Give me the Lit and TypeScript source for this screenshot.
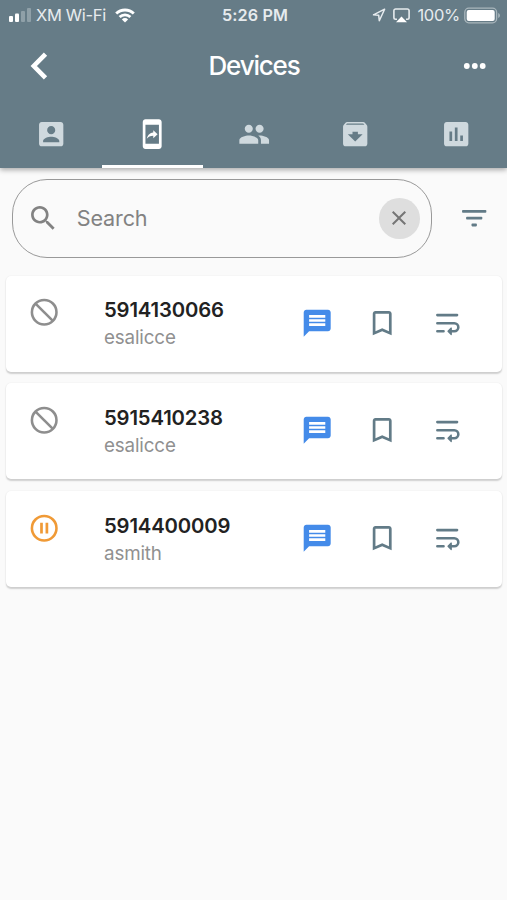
import { LitElement, html, css, svg } from "lit";
import { customElement, property } from "lit/decorators.js";

const ICONS: Record<string, unknown> = {
  account: svg`<path d="M3 5v14c0 1.1.89 2 2 2h14c1.1 0 2-.9 2-2V5c0-1.1-.9-2-2-2H5c-1.11 0-2 .9-2 2zm12 4c0 1.66-1.34 3-3 3s-3-1.34-3-3 1.34-3 3-3 3 1.34 3 3zm-9 8c0-2 4-3.1 6-3.1s6 1.1 6 3.1v1H6v-1z"/>`,
  share: svg`<path d="M17 1H7c-1.1 0-1.99.9-1.99 2v18c0 1.1.89 2 1.99 2h10c1.1 0 2-.9 2-2V3c0-1.1-.9-2-2-2zm0 18H7V5h10v14zm-4.2-5.78v1.75l3.2-2.99L12.8 9v1.7c-3.11.43-4.35 2.56-4.8 4.7 1.11-1.5 2.58-2.18 4.8-2.18z"/>`,
  people: svg`<path d="M16 11c1.66 0 2.99-1.34 2.99-3S17.66 5 16 5c-1.66 0-3 1.34-3 3s1.34 3 3 3zm-8 0c1.66 0 2.99-1.34 2.99-3S9.66 5 8 5C6.34 5 5 6.34 5 8s1.34 3 3 3zm0 2c-2.33 0-7 1.17-7 3.5V19h14v-2.5c0-2.33-4.67-3.5-7-3.5zm8 0c-.29 0-.62.02-.97.05 1.16.84 1.97 1.97 1.97 3.45V19h6v-2.5c0-2.33-4.67-3.5-7-3.5z"/>`,
  archive: svg`<path d="M20.54 5.23l-1.39-1.68C18.88 3.21 18.47 3 18 3H6c-.47 0-.88.21-1.16.55L3.46 5.23C3.17 5.57 3 6.02 3 6.5V19c0 1.1.9 2 2 2h14c1.1 0 2-.9 2-2V6.5c0-.48-.17-.93-.46-1.27zM12 17.5L6.5 12H10v-1.800h4V12h3.500L12 17.500zM5.120 5l.81-1h12l.94 1H5.120z"/>`,
  chart: svg`<path d="M19 3H5c-1.1 0-2 .9-2 2v14c0 1.1.9 2 2 2h14c1.1 0 2-.9 2-2V5c0-1.1-.9-2-2-2zM9 17H7v-7h2v7zm4 0h-2V7h2v10zm4 0h-2v-4h2v4z"/>`,
  search: svg`<path d="M15.500 14h-.79l-.28-.27C15.410 12.590 16 11.110 16 9.500 16 5.910 13.090 3 9.500 3S3 5.910 3 9.500 5.910 16 9.500 16c1.610 0 3.090-.59 4.230-1.570l.27.28v.79l5 4.990L20.490 19l-4.990-5zm-6 0C7.010 14 5 11.990 5 9.500S7.010 5 9.500 5 14 7.010 14 9.500 11.990 14 9.500 14z"/>`,
  close: svg`<path d="M19 6.410L17.590 5 12 10.590 6.410 5 5 6.410 10.590 12 5 17.590 6.410 19 12 13.410 17.590 19 19 17.590 13.410 12z"/>`,
  filter: svg`<g><rect x="3" y="5.900" width="18" height="2.100" rx=".6"/><rect x="6" y="10.950" width="12" height="2.100" rx=".6"/><rect x="10" y="16" width="4" height="2.100" rx=".6"/></g>`,
  block: svg`<circle cx="12" cy="12" r="9.100" class="thin"/><path d="M5.600 5.600l12.800 12.800" class="thin"/>`,
  pause: svg`<circle cx="12" cy="12" r="9.100" class="thin"/><path d="M9 8h2v8H9zM13 8h2v8h-2z"/>`,
  message: svg`<path d="M20 2H4c-1.1 0-1.99.9-1.99 2L2 22l4-4h14c1.1 0 2-.9 2-2V4c0-1.1-.9-2-2-2zm-2 12H6v-2h12v2zm0-3H6V9h12v2zm0-3H6V6h12v2z"/>`,
  bookmark: svg`<path d="M17 3H7c-1.1 0-1.990.9-1.990 2L5 21l7-3 7 3V5c0-1.1-.9-2-2-2zm0 15l-5-2.180L7 18V5h10v13z"/>`,
  wrap: svg`<path d="M4.700 6h14.600M4.700 12h12.550a3 3 0 0 1 0 6H14.500M4.700 18h4.600" class="line"/><path d="M15 15.600v4.800L12.600 18z" class="tip"/>`,
};

@customElement("ui-icon")
class UiIcon extends LitElement {
  static styles = css`
    :host { display: block; width: 32.4px; height: 32.4px; flex: none; }
    svg { display: block; width: 100%; height: 100%; fill: currentColor; }
    .line { fill: none; stroke: currentColor; stroke-width: 1.9; stroke-linecap: round; }
    .thin { fill: none; stroke: currentColor; stroke-width: 1.9; }
    .tip { stroke: currentColor; stroke-width: 0.9; stroke-linejoin: round; }
  `;
  @property() name = "";
  render() {
    return html`<svg viewBox="0 0 24 24">${ICONS[this.name]}</svg>`;
  }
}

@customElement("device-card")
class DeviceCard extends LitElement {
  static styles = css`
    :host {
      display: flex; box-sizing: border-box; height: 96px; padding-left: 21.800px;
      background: #fff; border-radius: 5px;
      box-shadow: 0 1.500px 1.500px rgba(0, 0, 0, 0.17), 0 0 2px rgba(0, 0, 0, 0.05);
    }
    .status { margin-top: 20.500px; color: #8e8e8e; }
    .paused { color: #f09a36; }
    .text { margin: 21.500px 0 0 43.800px; width: 197.200px; }
    .number { font-size: 20.300px; line-height: 26px; font-weight: 600; color: #222; letter-spacing: -0.15px; }
    .user { font-size: 18.800px; line-height: 30px; color: #909090; letter-spacing: -0.15px; }
    .actions { display: flex; gap: 32.400px; margin-top: 31px; color: #627b87; }
    .message { color: #448be9; }
  `;
  @property() number = "";
  @property() user = "";
  @property() status = "block";
  render() {
    return html`
      <ui-icon class="status ${this.status === "pause" ? "paused" : ""}" name=${this.status}></ui-icon>
      <div class="text">
        <div class="number">${this.number}</div>
        <div class="user">${this.user}</div>
      </div>
      <div class="actions">
        <ui-icon class="message" name="message"></ui-icon>
        <ui-icon name="bookmark"></ui-icon>
        <ui-icon name="wrap"></ui-icon>
      </div>`;
  }
}

@customElement("app-root")
class AppRoot extends LitElement {
  static styles = css`
    :host { display: block; height: 900px; overflow: hidden; background: #fafafa; font-family: Inter, "Liberation Sans", sans-serif; }
    header { position: relative; height: 168px; background: #667c87; color: #fff; box-shadow: 0 2px 5px rgba(0, 0, 0, 0.32); }
    .statusbar { display: grid; grid-template-columns: 1fr auto 1fr; align-items: center; height: 30px; padding: 0 6px 0 8px; font-size: 16.500px; color: #e6ebee; }
    .left, .right { display: flex; align-items: center; }
    .right { justify-content: flex-end; }
    .signal { width: 24px; height: 14px; margin-right: 4px; }
    .carrier { letter-spacing: -0.32px; }
    .wifi { width: 20px; height: 15px; margin-left: 9px; }
    .time { font-weight: 600; font-size: 16.200px; letter-spacing: 0.1px; padding-left: 1px; }
    .loc { width: 14px; height: 14px; margin-right: 7.500px; }
    .air { width: 17px; height: 15px; margin-right: 7px; }
    .percent { letter-spacing: -0.3px; }
    .battery { width: 37px; height: 17px; margin-left: 4px; }
    .titlebar { display: grid; grid-template-columns: 60px 1fr 60px; align-items: center; height: 71px; }
    .back { width: 20px; height: 30px; margin-left: 29px; }
    h1 { margin: 0; padding-left: 1px; text-align: center; font-size: 26px; line-height: 32px; font-weight: 500; letter-spacing: -1.200px; }
    .more { width: 24px; height: 8px; margin-left: 16px; }
    .tabs { display: grid; grid-template-columns: repeat(5, 101.200px); padding-left: 0.800px; height: 67px; }
    .tab { display: flex; justify-content: center; box-sizing: border-box; padding-top: 17.200px; color: #cfd9de; border-bottom: 3px solid transparent; }
    .tab.active { color: #fff; border-color: #fff; }
    .searchrow { display: flex; align-items: center; padding: 10.500px 16.200px 0 11.500px; }
    .search { display: flex; align-items: center; box-sizing: border-box; width: 420px; height: 79.500px; padding: 0 11px 0 14.800px; border: 1.500px solid #999; border-radius: 35px; color: #828282; }
    .placeholder { flex: 1; margin-left: 17px; font-size: 21.600px; letter-spacing: -0.15px; }
    .clear { display: flex; align-items: center; justify-content: center; width: 40.500px; height: 40.500px; border-radius: 50%; background: #dedede; color: #757575; }
    .clear ui-icon { width: 24px; height: 24px; }
    .filter { margin-left: auto; color: #627b87; }
    .list { display: flex; flex-direction: column; gap: 11.800px; padding: 17.500px 5.200px 0 6px; }
  `;
  render() {
    const tabs = ["account", "share", "people", "archive", "chart"];
    const devices = [
      ["5914130066", "esalicce", "block"],
      ["5915410238", "esalicce", "block"],
      ["5914400009", "asmith", "pause"],
    ];
    return html`
      <header>
        <div class="statusbar">
          <div class="left">
            <svg class="signal" viewBox="0 0 24 14">
              <g fill="#fff"><rect x="1" y="8" width="4" height="6" rx="1"/><rect x="7" y="5.500" width="4" height="8.500" rx="1"/></g>
              <g fill="#8fa0a8"><rect x="13" y="3" width="4" height="11" rx="1"/><rect x="19" y="0" width="4" height="14" rx="1"/></g>
            </svg>
            <span class="carrier">XM Wi-Fi</span>
            <svg class="wifi" viewBox="0 0 20 15" fill="none" stroke="#fff" stroke-width="2.800">
              <path d="M1.200 5.600a12.500 12.500 0 0 1 17.600 0M4.600 9.100a7.700 7.700 0 0 1 10.800 0"/>
              <path d="M10 14.500L6.900 11.400a4.400 4.400 0 0 1 6.200 0z" fill="#fff" stroke="none"/>
            </svg>
          </div>
          <span class="time">5:26 PM</span>
          <div class="right">
            <svg class="loc" viewBox="0 0 14 14" fill="none" stroke="#e6ebee" stroke-width="1.500" stroke-linejoin="round"><path d="M12.600 1.200L1.500 6.800l5.200.5.600 5.400z"/></svg>
            <svg class="air" viewBox="0 0 17 15"><path d="M4 11.200H2.600A1.700 1.700 0 0 1 .9 9.500V2.700A1.700 1.700 0 0 1 2.600 1h11.800a1.700 1.700 0 0 1 1.700 1.700v6.800a1.700 1.700 0 0 1-1.700 1.700H13" fill="none" stroke="#e6ebee" stroke-width="1.600"/><path d="M8.500 8.500l5.500 5.800H3z" fill="#fff"/></svg>
            <span class="percent">100%</span>
            <svg class="battery" viewBox="0 0 37 17"><rect x=".8" y="1.200" width="31.800" height="14.600" rx="4" fill="none" stroke="#a9b6bc" stroke-width="1.300"/><rect x="2.700" y="3.100" width="28" height="10.800" rx="2" fill="#fff"/><path d="M34.200 6v5c2.300-.8 2.300-4.200 0-5z" fill="#a9b6bc"/></svg>
          </div>
        </div>
        <div class="titlebar">
          <svg class="back" viewBox="0 0 20 30" fill="none" stroke="#fff" stroke-width="4.600"><path d="M16.500 3.200L4.800 15l11.700 11.800"/></svg>
          <h1>Devices</h1>
          <svg class="more" viewBox="0 0 24 8" fill="#fff"><circle cx="3.800" cy="4" r="2.900"/><circle cx="11.800" cy="4" r="2.900"/><circle cx="19.700" cy="4" r="2.900"/></svg>
        </div>
        <nav class="tabs">
          ${tabs.map((t, i) => html`<div class="tab ${i === 1 ? "active" : ""}"><ui-icon name=${t}></ui-icon></div>`)}
        </nav>
      </header>
      <div class="searchrow">
        <div class="search">
          <ui-icon name="search"></ui-icon>
          <span class="placeholder">Search</span>
          <span class="clear"><ui-icon name="close"></ui-icon></span>
        </div>
        <ui-icon class="filter" name="filter"></ui-icon>
      </div>
      <div class="list">
        ${devices.map(([n, u, s]) => html`<device-card number=${n} user=${u} status=${s}></device-card>`)}
      </div>`;
  }
}
